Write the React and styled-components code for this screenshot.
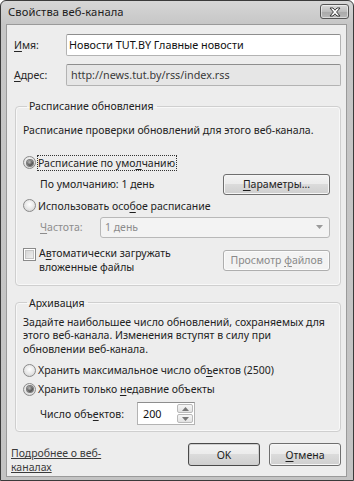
import React from "react";
import styled, { createGlobalStyle, css } from "styled-components";

const GlobalStyle = createGlobalStyle`
  html, body {
    margin: 0;
    padding: 0;
    background: #ffffff;
  }
  body {
    font-family: "Noto Sans", "DejaVu Sans", sans-serif;
    font-size: 10.5px;
    line-height: 14px;
    color: #232323;
  }
  * {
    box-sizing: border-box;
  }
`;

const Window = styled.div`
  width: 354px;
  height: 481px;
  border: 1px solid #3a3a3a;
  border-radius: 6px 6px 0 0;
  background: linear-gradient(#d6d6d6, #c6c6c6 24px, #c3c3c3);
  padding: 0 6px 3px 5px;
  display: flex;
  flex-direction: column;
`;

const TitleBar = styled.div`
  height: 23px;
  display: flex;
  align-items: center;
  justify-content: space-between;
  padding: 0 0 2px 2px;
`;

const Title = styled.span`
  font-size: 11.2px;
  color: #1c1c1c;
  letter-spacing: 0.1px;
`;

const CloseButton = styled.button`
  width: 29px;
  height: 15px;
  margin-right: -2px;
  padding: 0;
  border: 1px solid #555;
  border-radius: 3px;
  background: linear-gradient(#d9d9d9, #bdbdbd 50%, #a9a9a9 51%, #b8b8b8);
  box-shadow: inset 0 0 0 1px rgba(255, 255, 255, 0.5);
  display: flex;
  align-items: center;
  justify-content: center;
`;

const Content = styled.div`
  flex: 1;
  background: #ededed;
  border: 1px solid #9a9a9a;
  padding: 9px 5px 0 7px;
  display: flex;
  flex-direction: column;
`;

const FieldRow = styled.div`
  display: flex;
  align-items: center;
  margin-top: ${({ $gap }) => $gap || 0}px;
`;

const FieldLabel = styled.label`
  width: 52px;
  color: #262626;
`;

const TextBox = styled.div`
  flex: 1;
  height: 22px;
  display: flex;
  align-items: center;
  padding: 0 ${({ $readOnly }) => ($readOnly ? 4 : 2)}px;
  border: 1px solid #b3b3b3;
  border-top-color: #8e8e8e;
  border-radius: 2px;
  font-size: 10.8px;
  color: ${({ $readOnly }) => ($readOnly ? "#3a3a3a" : "#111")};
  background: ${({ $readOnly }) => ($readOnly ? "#e6e6e6" : "#ffffff")};
`;

const Group = styled.fieldset`
  margin: ${({ $top }) => $top}px 0 0 1px;
  padding: ${({ $pad }) => $pad};
  border: 1px solid #cfcfcf;
  border-radius: 4px;
  box-shadow: inset 0 0 0 1px #f8f8f8;
  min-width: 0;
`;

const Legend = styled.legend`
  margin-left: 4px;
  padding: 0 3px 0 2px;
  line-height: 14px;
  color: #222;
`;

const Para = styled.div`
  line-height: 13.5px;
  white-space: nowrap;
  margin-top: ${({ $top }) => $top || 0}px;
  color: #222;
`;

const OptionRow = styled.div`
  display: flex;
  align-items: center;
  height: 16px;
  margin-top: ${({ $top }) => $top || 0}px;
`;

const Radio = styled.span`
  width: 13px;
  height: 13px;
  flex: none;
  border-radius: 50%;
  border: 1px solid #8a8a8a;
  background: radial-gradient(circle at 50% 40%, #ffffff 0%, #e6e6e6 55%, #c9c9c9 100%);
  display: flex;
  align-items: center;
  justify-content: center;
  margin-right: 2px;
  ${({ $checked }) =>
    $checked &&
    css`
      &::after {
        content: "";
        width: 6px;
        height: 6px;
        border-radius: 50%;
        background: radial-gradient(circle at 40% 35%, #bdbdbd 0%, #5c5c5c 55%, #2a2a2a 100%);
        box-shadow: 0 0 0 1px #7a7a7a;
      }
    `}
`;

const Check = styled.span`
  width: 13px;
  height: 13px;
  flex: none;
  border: 1px solid #8a8a8a;
  box-shadow: inset 0 0 0 1px #fff, inset 0 0 0 2px #c4c4c4;
  background: linear-gradient(135deg, #d0d0d0, #f4f4f4);
  margin-right: 3px;
  margin-top: 2px;
`;

const OptionText = styled.span`
  color: #1e1e1e;
  line-height: 14px;
  white-space: nowrap;
  ${({ $focused }) =>
    $focused &&
    css`
      outline: 1px dotted #333;
      outline-offset: 0;
      padding: 0 1px 0 0;
    `}
`;

const Key = styled.span`
  text-decoration: underline;
  text-underline-offset: 2px;
`;

const SubRow = styled.div`
  display: flex;
  align-items: center;
  justify-content: ${({ $start }) => ($start ? "flex-start" : "space-between")};
  padding-left: ${({ $indent }) => $indent || 0}px;
  margin-top: ${({ $top }) => $top || 0}px;
`;

const SubText = styled.span`
  color: ${({ $disabled }) => ($disabled ? "#8c8c8c" : "#222")};
  width: ${({ $w }) => ($w ? `${$w}px` : "auto")};
  white-space: nowrap;
  flex: none;
`;

const Button = styled.button`
  width: ${({ $w }) => $w}px;
  height: ${({ $h }) => $h || 21}px;
  flex: none;
  font-family: inherit;
  font-size: 10.5px;
  line-height: 14px;
  margin-top: ${({ $top }) => $top || 0}px;
  padding: 0;
  border-radius: 3px;
  border: 1px solid ${({ $default }) => ($default ? "#4a4a4a" : "#6f6f6f")};
  color: #1e1e1e;
  background: linear-gradient(#f3f3f3, #ebebeb 49%, #dbdbdb 50%, #cfcfcf);
  box-shadow: inset 0 0 0 1px ${({ $default }) => ($default ? "#cfcfcf" : "#f6f6f6")};
  ${({ disabled }) =>
    disabled &&
    css`
      border-color: #aeaeae;
      color: #8a8a8a;
      background: #f3f3f3;
      box-shadow: inset 0 0 0 1px #fbfbfb;
    `}
`;

const SelectBox = styled.div`
  flex: 1;
  height: 21px;
  border: 1px solid #b8b8b8;
  border-radius: 3px;
  background: #f3f3f3;
  display: flex;
  align-items: center;
  justify-content: space-between;
  padding: 0 6px 0 4px;
  color: #8c8c8c;
`;

const CheckRow = styled.div`
  display: flex;
  align-items: flex-start;
  justify-content: space-between;
  margin-top: ${({ $top }) => $top || 0}px;
`;

const CheckLabel = styled.div`
  display: flex;
  align-items: flex-start;
`;

const CheckText = styled.div`
  line-height: 14px;
  white-space: nowrap;
  color: #222;
`;

const SpinWrap = styled.div`
  display: flex;
  width: 58px;
  height: 23px;
  border: 1px solid #b3b3b3;
  border-top-color: #8e8e8e;
  background: #fff;
`;

const SpinValue = styled.div`
  flex: 1;
  display: flex;
  align-items: center;
  padding-left: 5px;
  font-size: 10.8px;
  color: #111;
`;

const SpinButtons = styled.div`
  width: 17px;
  display: flex;
  flex-direction: column;
  gap: 1px;
  padding: 1px 1px 1px 0;
`;

const SpinBtn = styled.div`
  flex: 1;
  border: 1px solid #b9b9b9;
  border-radius: 2px;
  background: linear-gradient(#f6f6f6, #e2e2e2);
  display: flex;
  align-items: center;
  justify-content: center;
`;

const Footer = styled.div`
  display: flex;
  align-items: flex-start;
  justify-content: space-between;
  margin-top: 11px;
`;

const HelpLink = styled.a`
  color: #3a3a3a;
  text-decoration: underline;
  text-underline-offset: 1px;
  line-height: 13.5px;
  width: 120px;
  margin: 4px 0 0 -3px;
`;

const FooterButtons = styled.div`
  display: flex;
  gap: 9px;
`;

const Arrow = ({ up, color = "#777" }) => (
  <svg width="7" height="4" viewBox="0 0 7 4">
    <path d={up ? "M0 4 L3.5 0 L7 4 Z" : "M0 0 L7 0 L3.5 4 Z"} fill={color} />
  </svg>
);

export default function App() {
  return (
    <>
      <GlobalStyle />
      <Window>
        <TitleBar>
          <Title>Свойства веб-канала</Title>
          <CloseButton aria-label="Закрыть">
            <svg width="14" height="10" viewBox="0 0 14 10">
              <path
                d="M2 1 L5 1 L7 3.2 L9 1 L12 1 L8.6 5 L12 9 L9 9 L7 6.8 L5 9 L2 9 L5.4 5 Z"
                fill="#ffffff"
                stroke="#3a3a3a"
                strokeWidth="1"
                strokeLinejoin="round"
              />
            </svg>
          </CloseButton>
        </TitleBar>
        <Content>
          <FieldRow>
            <FieldLabel>
              <Key>И</Key>мя:
            </FieldLabel>
            <TextBox>Новости TUT.BY Главные новости</TextBox>
          </FieldRow>
          <FieldRow $gap={8}>
            <FieldLabel>
              <Key>А</Key>дрес:
            </FieldLabel>
            <TextBox $readOnly>http://news.tut.by/rss/index.rss</TextBox>
          </FieldRow>

          <Group $top={13} $pad="0 10px 11px 7px">
            <Legend>Расписание обновления</Legend>
            <Para $top={11}>Расписание проверки обновлений для этого веб-канала.</Para>
            <OptionRow $top={17}>
              <Radio $checked />
              <OptionText $focused>
                Расписание по умо<Key>л</Key>чанию
              </OptionText>
            </OptionRow>
            <SubRow $indent={17} $top={3}>
              <SubText>По умолчанию: 1 день</SubText>
              <Button $w={107}>
                <Key>П</Key>араметры...
              </Button>
            </SubRow>
            <OptionRow $top={3}>
              <Radio />
              <OptionText>
                Использовать осо<Key>б</Key>ое расписание
              </OptionText>
            </OptionRow>
            <SubRow $indent={17} $top={3}>
              <SubText $disabled $w={60}>
                <Key>Ч</Key>астота:
              </SubText>
              <SelectBox>
                <span>1 день</span>
                <Arrow color="#9a9a9a" />
              </SelectBox>
            </SubRow>
            <CheckRow $top={8}>
              <CheckLabel>
                <Check />
                <CheckText>
                  А<Key>в</Key>томатически загружать
                  <br />
                  вложенные файлы
                </CheckText>
              </CheckLabel>
              <Button $w={107} $h={21} $top={4} disabled>
                Просмотр <Key>ф</Key>айлов
              </Button>
            </CheckRow>
          </Group>

          <Group $top={10} $pad="0 10px 6px 7px">
            <Legend>Архивация</Legend>
            <Para $top={6}>
              Задайте наибольшее число обновлений, сохраняемых для
              <br />
              этого веб-канала. Изменения вступят в силу при
              <br />
              обновлении веб-канала.
            </Para>
            <OptionRow $top={6}>
              <Radio />
              <OptionText>
                Хранить максимальное число об<Key>ъ</Key>ектов (2500)
              </OptionText>
            </OptionRow>
            <OptionRow $top={3}>
              <Radio $checked />
              <OptionText>
                Хранить только <Key>н</Key>едавние объекты
              </OptionText>
            </OptionRow>
            <SubRow $indent={17} $top={5} $start>
              <SubText $w={97}>
                Число объ<Key>е</Key>ктов:
              </SubText>
              <SpinWrap>
                <SpinValue>200</SpinValue>
                <SpinButtons>
                  <SpinBtn>
                    <Arrow up />
                  </SpinBtn>
                  <SpinBtn>
                    <Arrow />
                  </SpinBtn>
                </SpinButtons>
              </SpinWrap>
            </SubRow>
          </Group>

          <Footer>
            <HelpLink href="#">Подробнее о веб-каналах</HelpLink>
            <FooterButtons>
              <Button $w={72} $h={23} $default>
                OK
              </Button>
              <Button $w={72} $h={23}>
                <Key>О</Key>тмена
              </Button>
            </FooterButtons>
          </Footer>
        </Content>
      </Window>
    </>
  );
}
